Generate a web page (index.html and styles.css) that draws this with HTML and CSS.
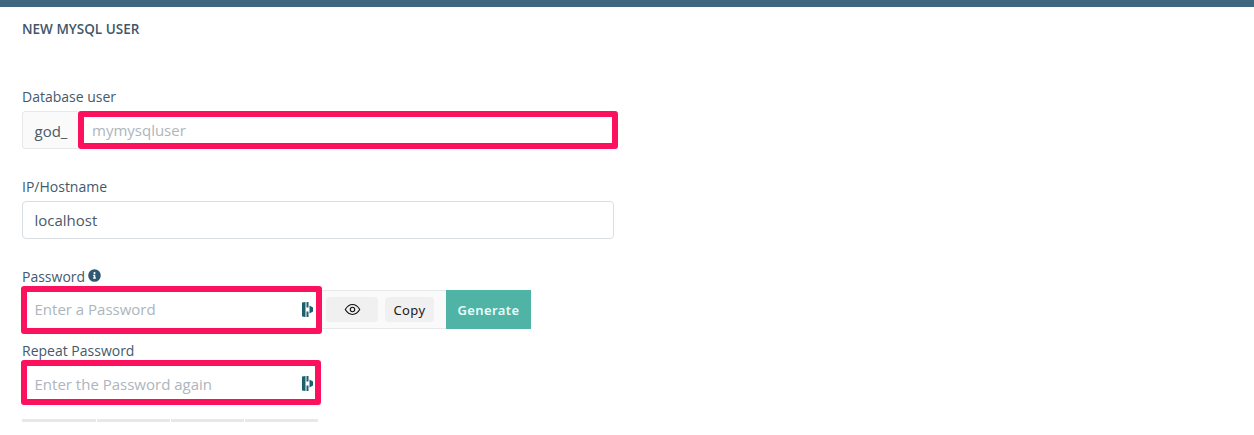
FILE: index.html
```html
<!DOCTYPE html>
<html lang="en">
<head>
<meta charset="utf-8">
<title>New MySQL user</title>
<link rel="stylesheet" href="styles.css">
</head>
<body>
<div class="topbar"></div>
<main class="panel">
  <h2 class="title">NEW MYSQL USER</h2>

  <div class="field field-user">
    <label class="label">Database user</label>
    <div class="user-row">
      <span class="prefix">god_</span>
      <div class="hl hl-user"><span class="ph">mymysqluser</span></div>
    </div>
  </div>

  <div class="field field-host">
    <label class="label">IP/Hostname</label>
    <div class="input">localhost</div>
  </div>

  <div class="field field-pass">
    <label class="label">Password
      <svg class="info" viewBox="0 0 512 512"><path fill-rule="evenodd" d="M256 8a248 248 0 1 0 0 496 248 248 0 0 0 0-496zm0 110a42 42 0 1 1 0 84 42 42 0 0 1 0-84zm56 254c0 7-5 12-12 12h-88c-7 0-12-5-12-12v-24c0-7 5-12 12-12h12v-64h-12c-7 0-12-5-12-12v-24c0-7 5-12 12-12h64c7 0 12 5 12 12v100h12c7 0 12 5 12 12z"/></svg>
    </label>
    <div class="pass-row">
      <div class="addons">
        <button class="btn btn-eye" type="button">
          <svg viewBox="0 0 20 20" class="eye"><path d="M1.500 10C4 5.900 6.800 4.200 10 4.200s6 1.700 8.500 5.800c-2.500 4.100-5.300 5.800-8.500 5.800S4 14.100 1.500 10z" fill="none" stroke="#111" stroke-width="1.300"/><circle cx="10" cy="10" r="2.600" fill="none" stroke="#111" stroke-width="1.300"/></svg>
        </button>
        <button class="btn btn-copy" type="button">Copy</button>
      </div>
      <button class="generate" type="button">Generate</button>
      <div class="hl hl-pass">
        <span class="ph">Enter a Password</span>
        <svg class="dash" viewBox="0 0 11 15"><path d="M0 .5L3.500 0v15L0 14.500zM4.500 0H6.500v5.500H4.500zM4.500 9.500H6.500V15H4.500zM7.500 3.500L11 5.500v4l-3.500 2z" fill="#1c5f6f"/></svg>
      </div>
    </div>
  </div>

  <div class="field field-repeat">
    <label class="label">Repeat Password</label>
    <div class="hl hl-repeat">
      <span class="ph">Enter the Password again</span>
      <svg class="dash" viewBox="0 0 11 15"><path d="M0 .5L3.500 0v15L0 14.500zM4.500 0H6.500v5.500H4.500zM4.500 9.500H6.500V15H4.500zM7.500 3.500L11 5.500v4l-3.500 2z" fill="#1c5f6f"/></svg>
    </div>
  </div>

  <div class="meter"><i></i><i></i><i></i><i></i></div>
</main>
</body>
</html>
```

FILE: styles.css
```css
* { box-sizing: border-box; }
html, body { margin: 0; padding: 0; }
body {
  height: 435px;
  overflow: hidden;
  background: #fff;
  font-family: "Open Sans", "Liberation Sans", sans-serif;
  color: #41566a;
}
.topbar { height: 7px; background: #41667f; }
.panel { padding: 14px 0 0 22px; }
.title {
  margin: 0;
  font-size: 13.500px;
  line-height: 16px;
  font-weight: 600;
  color: #41566a;
}
.label {
  display: block;
  font-size: 14px;
  line-height: 20px;
  font-weight: 400;
  color: #44596c;
}
.field-user { margin-top: 50px; }
.user-row { display: flex; margin-top: 4px; height: 38px; }
.prefix {
  width: 56px;
  border: 1px solid #e6e9ec;
  border-right: 0;
  border-radius: 4px 0 0 4px;
  background: #fafafa;
  font-size: 15px;
  line-height: 38px;
  padding-left: 11.500px;
  color: #495a68;
}
.hl {
  display: flex;
  align-items: center;
  border: 6px solid #fb115e;
  border-radius: 3px;
  background: #fff;
}
.hl-user { width: 540px; padding-left: 8px; }
.ph { font-size: 15px; color: #adb5bd; }
.field-host { margin-top: 28px; }
.input {
  margin-top: 4px;
  width: 592px;
  height: 38px;
  border: 1px solid #d9dee2;
  border-radius: 4px;
  font-size: 15px;
  line-height: 36px;
  padding-left: 11.500px;
  color: #495a68;
}
.field-pass { margin-top: 28px; }
.field-pass .label { display: flex; align-items: center; gap: 3px; line-height: 20px; }
.info { width: 13px; height: 13px; fill: #2f5872; margin-top: -3px; }
.pass-row { position: relative; display: flex; align-items: center; margin-top: 3px; height: 39px; }
.addons {
  display: flex;
  align-items: center;
  gap: 7px;
  width: 424px;
  height: 39px;
  padding-left: 303px;
  border: 1px solid #e6e9ec;
  border-right: 0;
  background: #fafafa;
}
.btn {
  height: 25px;
  border: 0;
  border-radius: 4px;
  background: #f0f0f0;
  padding: 0;
  font-family: "Noto Sans", "Open Sans", sans-serif;
  font-size: 13px;
  font-weight: 400;
  letter-spacing: .4px;
  color: #1b1b1b;
  display: flex;
  align-items: center;
  justify-content: center;
}
.btn-eye { width: 52px; }
.eye { width: 17px; height: 17px; }
.btn-copy { width: 49px; }
.generate {
  width: 85px;
  height: 39px;
  border: 0;
  background: #4fb3a6;
  color: #e9fbf6;
  font-family: "Noto Sans", "Open Sans", sans-serif;
  font-size: 13px;
  font-weight: 600;
  letter-spacing: .4px;
  padding: 0;
}
.hl-pass {
  position: absolute;
  left: -1px;
  top: -4px;
  width: 301px;
  height: 48px;
  padding: 0 0 2px 7.500px;
  justify-content: space-between;
}
.hl-repeat {
  margin-left: -1px;
  margin-top: -1px;
  width: 300px;
  height: 45px;
  padding: 2px 0 0 7.500px;
  justify-content: space-between;
}
.dash { width: 11px; height: 15px; margin-right: 3px; }
.hl-repeat .dash { margin-right: 2px; }
.field-repeat { margin-top: 12px; }
.meter { display: grid; grid-template-columns: 74px 73px 73px 73px; gap: 1px; margin-top: 14px; height: 3px; }
.meter i { background: #e8e8e8; }
```
